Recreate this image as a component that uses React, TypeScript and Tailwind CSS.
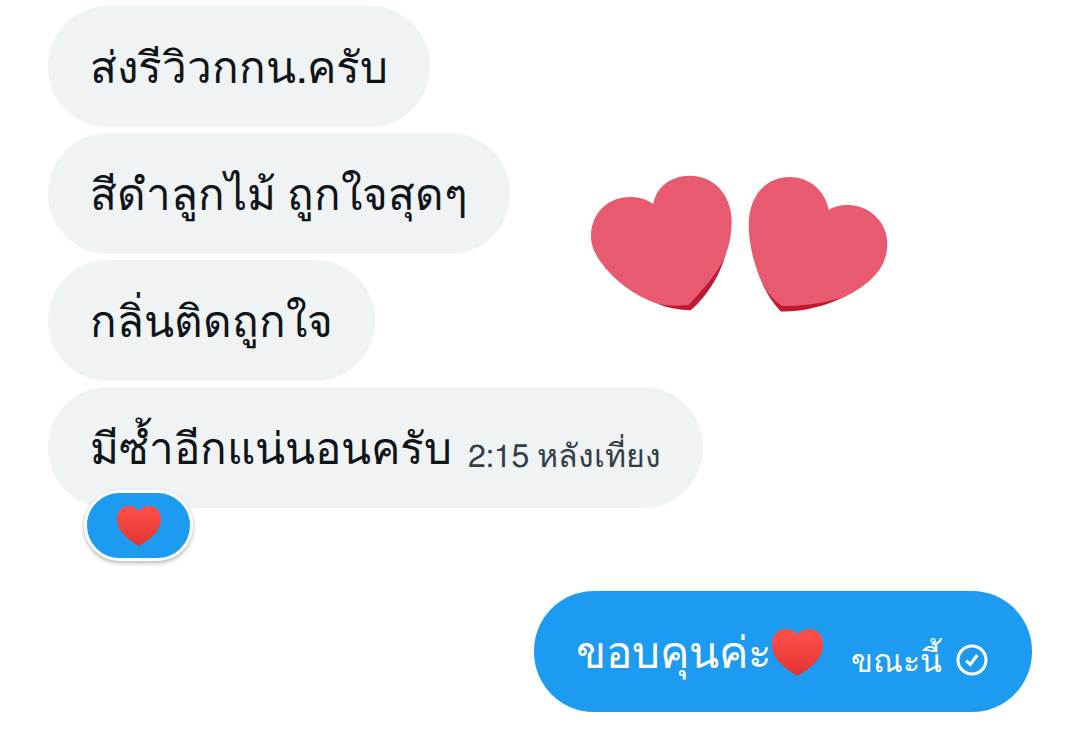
import type { ReactNode } from "react";

function Heart({ id, className }: { id: string; className: string }) {
  return (
    <svg viewBox="0 0 50 46" className={className} role="img" aria-label="❤️" preserveAspectRatio="none">
      <defs>
        <linearGradient id={id} x1="0" y1="0" x2="0" y2="1">
          <stop offset="0" stopColor="#ff4f49" />
          <stop offset="0.25" stopColor="#fb4a46" />
          <stop offset="1" stopColor="#e0332f" />
        </linearGradient>
      </defs>
      <path
        fill={`url(#${id})`}
        d="M25 6C22.500 2.200 18.500 0 13.800 0C5.800 0 0 6 0 15C0 28.500 10.500 37.500 25 46C39.500 37.500 50 28.500 50 15C50 6 44.200 0 36.200 0C31.500 0 27.500 2.200 25 6Z"
      />
    </svg>
  );
}

function TwoHearts() {
  return (
    <svg viewBox="0 0 300 138" className="w-[300px] shrink-0" role="img" aria-label="💕">
      <path
        fill="#be1931"
        d="M136 81C131 101 117 122 101.700 135.300C90 135 79 133 69 129L80 105L115 90Z"
      />
      <path
        fill="#e75a70"
        d="M64.300 29C67 13 81 .8 101 .8C125 .8 142.700 20 142.700 47C142.700 59 140.500 70 136 82C129 97 115 114 99.500 130C89 131 79 131 69 129C46 121 25 106 11 86C5 77 2 70 2 61.500C2 38 19 22 41 22C50 22 58 24.500 64.300 29Z"
      />
      <path
        fill="#be1931"
        d="M174 110C178 119 184 128 191.700 136.500C214 137 237 131 257 121L230 100L190 100Z"
      />
      <path
        fill="#e75a70"
        d="M239.700 35C236 15 220 2 200.300 2C176 2 159.700 22 159.700 50C159.700 69 165 90 174.300 111C179 119 185 125 193 131C215 131 236 128 256 121.700C272 114 284 104 291 94C296 86 298.300 78 298.300 68.300C298.300 47 280 30 259 30C251 30 245 31.500 239.700 35Z"
      />
    </svg>
  );
}

function DeliveredIcon() {
  return (
    <svg
      viewBox="0 0 32 32"
      className="size-8 shrink-0"
      fill="none"
      stroke="currentColor"
      strokeWidth="3"
      role="img"
      aria-label="ส่งแล้ว"
    >
      <circle cx="16" cy="16" r="14" />
      <path d="M10.200 16.600L14.300 20.400L21.300 11" />
    </svg>
  );
}

function Bubble({ children }: { children: ReactNode }) {
  return (
    <div className="flex min-h-[121px] w-fit items-center rounded-[60px] bg-[#eff3f4] px-[42px] pt-0.5 text-[#0f1419]">
      {children}
    </div>
  );
}

function Message({ children }: { children: ReactNode }) {
  return <p className="pt-1 text-[44px] leading-[64px] whitespace-nowrap">{children}</p>;
}

export default function App() {
  return (
    <main className="min-h-screen bg-white px-12 pt-1.5 pb-9 font-['FreeSans','Liberation_Sans',sans-serif]">
      <section className="flex flex-col gap-1.5">
        <div className="flex items-center gap-[79px]">
          <div className="flex flex-col gap-1.5">
            <Bubble>
              <Message>ส่งรีวิวกกน.ครับ</Message>
            </Bubble>
            <Bubble>
              <Message>สีดำลูกไม้ ถูกใจสุดๆ</Message>
            </Bubble>
            <Bubble>
              <Message>กลิ่นติดถูกใจ</Message>
            </Bubble>
          </div>
          <div className="pt-[100px]">
            <TwoHearts />
          </div>
        </div>
        <div className="relative w-fit">
          <Bubble>
            <div className="flex items-center gap-4">
              <Message>มีซ้ำอีกแน่นอนครับ</Message>
              <time className="pt-4 text-[32px] leading-[48px] whitespace-nowrap text-[#333e48]">2:15 หลังเที่ยง</time>
            </div>
          </Bubble>
          <button
            type="button"
            aria-label="❤️"
            className="absolute top-[103px] left-9 flex h-[71px] w-[109px] items-center justify-center rounded-full border-[3px] border-white bg-[#1d9bf0] shadow-[0_2px_4px_rgba(0,0,0,0.3)]"
          >
            <Heart id="reaction-heart" className="h-10 w-11" />
          </button>
        </div>
      </section>

      <section className="mt-[83px] flex justify-end">
        <div className="flex min-h-[121px] items-center rounded-[60px] bg-[#1d9bf0] pt-0.5 pr-11 pl-[42px] text-white">
          <div className="flex items-center">
            <Message>ขอบคุนค่ะ</Message>
            <Heart id="message-heart" className="h-[47px] w-[51px]" />
          </div>
          <div className="ml-7 flex items-center gap-3.5 pt-3.5">
            <time className="pt-1 text-[32px] leading-[48px] whitespace-nowrap">ขณะนี้</time>
            <DeliveredIcon />
          </div>
        </div>
      </section>
    </main>
  );
}
